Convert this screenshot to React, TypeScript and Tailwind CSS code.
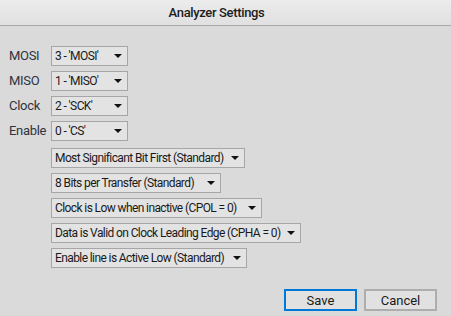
import React from 'react';

const Arrow = () => (
  <svg width="8" height="4" viewBox="0 0 8 4" className="shrink-0">
    <path d="M0 0 H8 L4 4 Z" fill="#111" />
  </svg>
);

const Combo = ({ label, w }: { label: string; w: string }) => (
  <div className={`flex h-[20px] items-center justify-between border border-[#a6a6a6] bg-[#e3e3e3] pl-[3px] pr-[5px] text-[12px] tracking-[-0.6px] text-[#1a1a1a] ${w}`}>
    <span className="whitespace-nowrap leading-none">{label}</span>
    <Arrow />
  </div>
);

const channels = [
  { name: 'MOSI', value: "3 - 'MOSI'" },
  { name: 'MISO', value: "1 - 'MISO'" },
  { name: 'Clock', value: "2 - 'SCK'" },
  { name: 'Enable', value: "0 - 'CS'" },
];

export default function App() {
  return (
    <div className="flex h-[316px] w-[451px] flex-col bg-[#dadada] font-['Roboto',sans-serif]">
      <div className="flex h-[26px] items-center justify-center border-b border-[#a9a9a9] bg-gradient-to-b from-[#ececec] to-[#e0e0e0] pr-[18px]">
        <span className="text-[13px] font-medium tracking-[-0.35px] text-[#1c1c1c]">Analyzer Settings</span>
      </div>
      <div className="flex flex-1 flex-col px-[9px] pt-[20px]">
        <div className="flex flex-col gap-[5px]">
          {channels.map((c) => (
            <div key={c.name} className="flex items-center">
              <span className="w-[42px] text-[13px] tracking-[-0.3px] text-[#2e3440]">{c.name}</span>
              <Combo label={c.value} w="w-[77px]" />
            </div>
          ))}
        </div>
        <div className="mt-[7px] flex flex-col gap-[5px] pl-[42px]">
          <Combo label="Most Significant Bit First (Standard)" w="w-[194px]" />
          <Combo label="8 Bits per Transfer (Standard)" w="w-[170px]" />
          <Combo label="Clock is Low when inactive (CPOL = 0)" w="w-[211px]" />
          <Combo label="Data is Valid on Clock Leading Edge (CPHA = 0)" w="w-[250px]" />
          <Combo label="Enable line is Active Low (Standard)" w="w-[196px]" />
        </div>
        <div className="mt-[21px] flex justify-end gap-[7px] pr-[5px]">
          <button className="h-[22px] w-[73px] border-2 border-[#0078d7] bg-[#e1e1e1] text-[13px] text-[#1a1a1a]">Save</button>
          <button className="h-[22px] w-[73px] border-2 border-[#adadad] bg-[#e1e1e1] text-[13px] text-[#1a1a1a]">Cancel</button>
        </div>
      </div>
    </div>
  );
}
